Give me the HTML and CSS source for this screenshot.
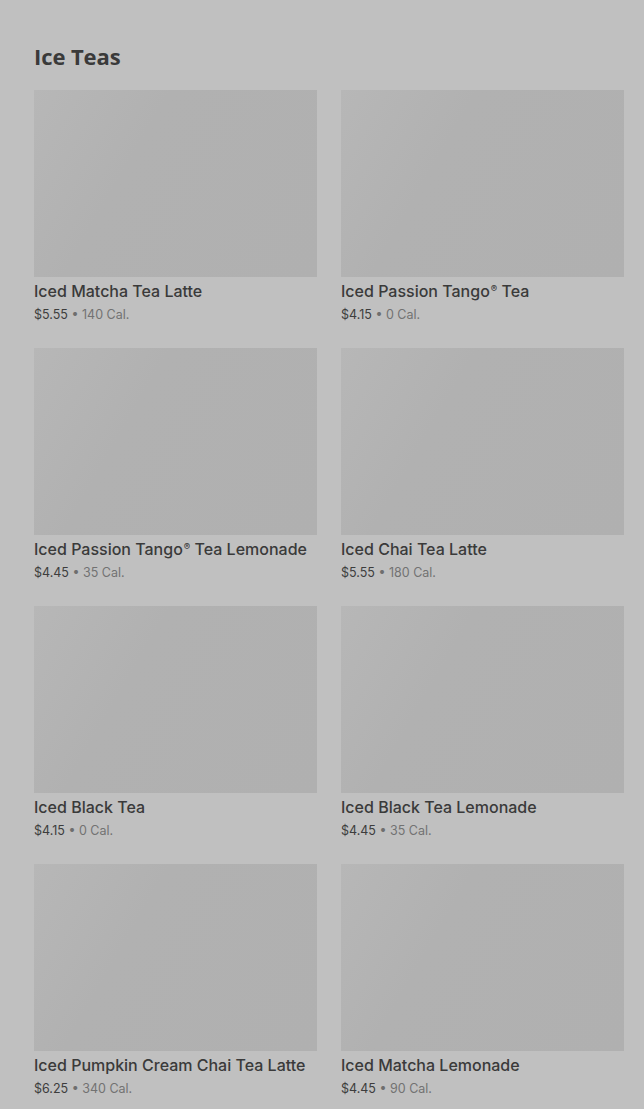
FILE: index.html
```html
<!DOCTYPE html>
<html lang="en">
<head>
    <meta charset="UTF-8">
    <title>Ice Teas</title>
    <link rel="stylesheet" href="styles.css">
</head>
<body>
    <section class="category">
        <h2 class="categoryTitle">Ice Teas</h2>
        <div class="productGrid">
            <div class="product">
                <div class="productImage"></div>
                <div class="productName">Iced Matcha Tea Latte</div>
                <div class="productMeta"><span class="price">$5.55</span> • <span class="cal">140 Cal.</span></div>
            </div>
            <div class="product">
                <div class="productImage"></div>
                <div class="productName">Iced Passion Tango<span class="reg">®</span> Tea</div>
                <div class="productMeta"><span class="price">$4.15</span> • <span class="cal">0 Cal.</span></div>
            </div>
            <div class="product">
                <div class="productImage"></div>
                <div class="productName">Iced Passion Tango<span class="reg">®</span> Tea Lemonade</div>
                <div class="productMeta"><span class="price">$4.45</span> • <span class="cal">35 Cal.</span></div>
            </div>
            <div class="product">
                <div class="productImage"></div>
                <div class="productName">Iced Chai Tea Latte</div>
                <div class="productMeta"><span class="price">$5.55</span> • <span class="cal">180 Cal.</span></div>
            </div>
            <div class="product">
                <div class="productImage"></div>
                <div class="productName">Iced Black Tea</div>
                <div class="productMeta"><span class="price">$4.15</span> • <span class="cal">0 Cal.</span></div>
            </div>
            <div class="product">
                <div class="productImage"></div>
                <div class="productName">Iced Black Tea Lemonade</div>
                <div class="productMeta"><span class="price">$4.45</span> • <span class="cal">35 Cal.</span></div>
            </div>
            <div class="product">
                <div class="productImage"></div>
                <div class="productName">Iced Pumpkin Cream Chai Tea Latte</div>
                <div class="productMeta"><span class="price">$6.25</span> • <span class="cal">340 Cal.</span></div>
            </div>
            <div class="product">
                <div class="productImage"></div>
                <div class="productName">Iced Matcha Lemonade</div>
                <div class="productMeta"><span class="price">$4.45</span> • <span class="cal">90 Cal.</span></div>
            </div>
        </div>
    </section>
</body>
</html>
```

FILE: styles.css
```css
body {
    margin: 0;
    font-family: Inter, Roboto, "Liberation Sans", sans-serif;
    background-color: #c0c0c0;
    color: #3b3b3b;
}
.category {
    padding: 41px 20px 0 34px;
}
.categoryTitle {
    margin: 0 0 19px;
    font-family: "Open Sans", "Liberation Sans", sans-serif;
    font-size: 22px;
    font-weight: 700;
    letter-spacing: -0.1px;
    line-height: 30px;
    color: #3a3a3a;
}
.productGrid {
    display: grid;
    grid-template-columns: 1fr 1fr;
    column-gap: 24px;
    row-gap: 24px;
}
.productImage {
    height: 187px;
    background: linear-gradient(120deg, #b7b7b7 0%, #b1b1b1 35%, #b0b0b0 100%);
}
.productName {
    margin-top: 5px;
    font-size: 16px;
    font-weight: 500;
    line-height: 18px;
    color: #3a3a3a;
}
.reg {
    font-size: 0.6em;
    line-height: 0;
    vertical-align: 0.5em;
    margin-left: 1px;
}
.productMeta {
    margin-top: 6px;
    font-size: 12.5px;
    line-height: 18px;
    color: #6e6e6e;
}
.price {
    color: #3d3d3d;
}
.cal {
    color: #727272;
}
```
